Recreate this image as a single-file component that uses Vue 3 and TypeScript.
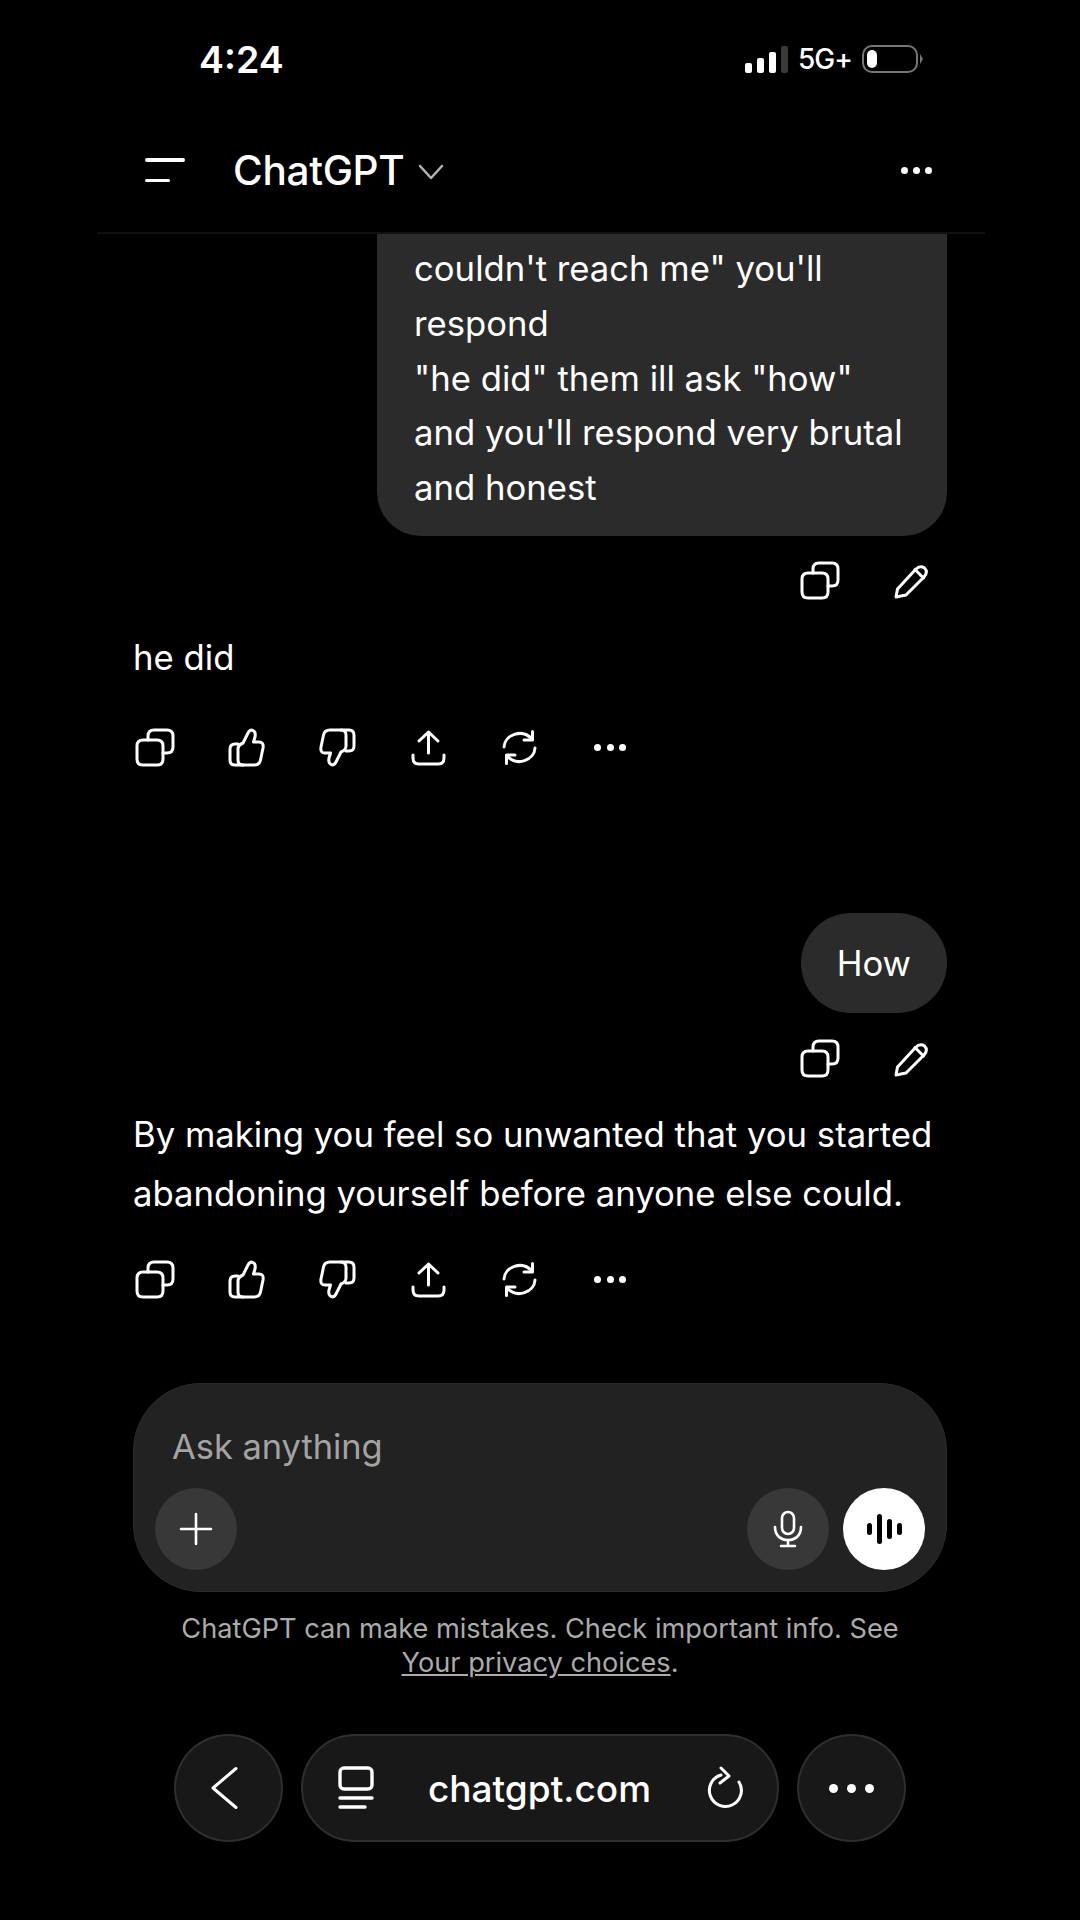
<template>
  <div class="phone">
    <!-- Status bar -->
    <div class="status">
      <span class="time">4:24</span>
      <div class="status-right">
        <div class="signal">
          <span v-for="(h, i) in signalBars" :key="i" class="signal-bar" :class="{ 'signal-bar--off': i === 3 }" :style="{ height: h + 'px' }"></span>
        </div>
        <span class="network">5G+</span>
        <div class="battery"><span class="battery-level"></span></div>
        <span class="battery-nub"></span>
      </div>
    </div>

    <!-- Header -->
    <header class="topbar">
      <div class="menu-icon"><span></span><span class="menu-short"></span></div>
      <span class="title">ChatGPT</span>
      <svg class="chevron" width="26" height="16" viewBox="0 0 26 16" fill="none" stroke="#b4b4b4" stroke-width="2.5" stroke-linecap="round" stroke-linejoin="round"><path d="M2 2 13 14 24 2" /></svg>
      <div class="topbar-dots"><i></i><i></i><i></i></div>
    </header>

    <!-- Conversation -->
    <main class="chat">
      <div class="bubble bubble--long">
        couldn't reach me" you'll<br />respond<br />"he did" them ill ask "how"<br />and you'll respond very brutal<br />and honest
      </div>
      <div class="user-actions first-actions">
        <svg v-for="name in userActions" :key="name" class="icon" viewBox="0 0 40 40" fill="none" stroke="#fff" stroke-width="3" stroke-linecap="round" stroke-linejoin="round">
          <path v-for="d in icons[name]" :key="d" :d="d" />
        </svg>
      </div>
      <p class="answer answer--short">he did</p>
      <div class="bot-actions bot-actions--first">
        <svg v-for="name in botActions" :key="name" class="icon" viewBox="0 0 40 40" fill="none" stroke="#fff" stroke-width="3" stroke-linecap="round" stroke-linejoin="round">
          <g :transform="name === 'down' ? 'rotate(180 20.5 20.5)' : undefined">
            <path v-for="d in icons[name]" :key="d" :d="d" />
          </g>
        </svg>
        <div class="icon-dots"><i></i><i></i><i></i></div>
      </div>

      <div class="bubble bubble--short">How</div>
      <div class="user-actions">
        <svg v-for="name in userActions" :key="name" class="icon" viewBox="0 0 40 40" fill="none" stroke="#fff" stroke-width="3" stroke-linecap="round" stroke-linejoin="round">
          <path v-for="d in icons[name]" :key="d" :d="d" />
        </svg>
      </div>
      <p class="answer">By making you feel so unwanted that you started<br />abandoning yourself before anyone else could.</p>
      <div class="bot-actions">
        <svg v-for="name in botActions" :key="name" class="icon" viewBox="0 0 40 40" fill="none" stroke="#fff" stroke-width="3" stroke-linecap="round" stroke-linejoin="round">
          <g :transform="name === 'down' ? 'rotate(180 20.5 20.5)' : undefined">
            <path v-for="d in icons[name]" :key="d" :d="d" />
          </g>
        </svg>
        <div class="icon-dots"><i></i><i></i><i></i></div>
      </div>
    </main>

    <!-- Composer -->
    <section class="composer">
      <div class="placeholder">Ask anything</div>
      <div class="composer-row">
        <button class="round-btn">
          <svg width="34" height="34" viewBox="0 0 34 34" fill="none" stroke="#fff" stroke-width="2.6" stroke-linecap="round"><path d="M17 2V32M2 17H32" /></svg>
        </button>
        <button class="round-btn mic-btn">
          <svg width="32" height="38" viewBox="0 0 32 38" fill="none" stroke="#fff" stroke-width="2.6" stroke-linecap="round" stroke-linejoin="round">
            <rect x="10" y="2" width="12" height="22" rx="6" />
            <path d="M3 17C3 25 8 30 16 30S29 25 29 17M16 30V36M9 36H23" />
          </svg>
        </button>
        <button class="round-btn voice-btn">
          <span v-for="(h, i) in voiceBars" :key="i" class="voice-bar" :style="{ height: h + 'px' }"></span>
        </button>
      </div>
    </section>
    <p class="disclaimer">ChatGPT can make mistakes. Check important info. See<br /><u>Your privacy choices</u>.</p>

    <!-- Browser bar -->
    <nav class="browser">
      <button class="browser-circle">
        <svg class="back-icon" width="27" height="44" viewBox="0 0 27 44" fill="none" stroke="#fff" stroke-width="3" stroke-linecap="round" stroke-linejoin="round"><path d="M25 2.5 2 22 25 41.5" /></svg>
      </button>
      <div class="url-pill">
        <svg width="36" height="44" viewBox="0 0 36 44" fill="none" stroke="#fff" stroke-width="3.4" stroke-linecap="round" stroke-linejoin="round">
          <rect x="2" y="2" width="32" height="21" rx="4" />
          <path d="M2 32H34M2 41H27" />
        </svg>
        <span class="url">chatgpt.com</span>
        <svg width="38" height="44" viewBox="0 0 38 44" fill="none" stroke="#fff" stroke-width="3" stroke-linecap="round" stroke-linejoin="round">
          <path d="M16 9A16 16 0 1 0 34 16" />
          <path d="M16 2 24 10 15 17" />
        </svg>
      </div>
      <button class="browser-circle">
        <div class="browser-dots"><i></i><i></i><i></i></div>
      </button>
    </nav>
  </div>
</template>

<script setup lang="ts">
const signalBars = [10, 15, 21, 27]
const voiceBars = [12, 30, 20, 12]

const userActions = ['copy', 'pencil']
const botActions = ['copy', 'up', 'down', 'share', 'regen']

const thumb = [
  'M17 16 22 6Q24 2 27 3.5 30 5 29 10L27.5 15H33Q38 15 37 21L34.5 33Q33.5 38 28 38H17Q12 38 12 33V22Q12 18 17 16Z',
  'M12 17H9Q4 17 4 22V33Q4 38 9 38H17',
]

const icons: Record<string, string[]> = {
  copy: [
    'M8 13H22Q28 13 28 19V32Q28 38 22 38H8Q2 38 2 32V19Q2 13 8 13Z',
    'M13 13V9Q13 3 19 3H32Q38 3 38 9V20Q38 26 32 26H28',
  ],
  pencil: [
    'M5 37 6.5 29 24.5 9.5Q29 5 33.5 8 37.5 12 33 17L15 35Z',
    'M24 9.5 32.5 18',
  ],
  up: thumb,
  down: thumb,
  share: [
    'M20.5 26V5M11 14 20.5 5 30 14',
    'M5 28V31Q5 37 11 37H30Q36 37 36 31V28',
  ],
  regen: [
    'M5 20C5.5 8 23 1 33 12',
    'M33.5 4.5V13H25',
    'M36 21C35.5 33 18 40 8 29',
    'M7.5 36.5V28H16',
  ],
}
</script>

<style>
html,
body {
  background: #000;
}
</style>

<style scoped>
.phone {
  width: 1080px;
  height: 1920px;
  background: #000;
  color: #fff;
  display: flex;
  flex-direction: column;
  overflow: hidden;
  font-family: Inter, "Liberation Sans", sans-serif;
}

/* Status bar */
.status {
  height: 118px;
  flex-shrink: 0;
  display: flex;
  align-items: center;
  justify-content: space-between;
  padding: 0 157px 0 199px;
}

.time {
  font-size: 37.5px;
  font-weight: 600;
}

.status-right {
  display: flex;
  align-items: center;
}

.signal {
  display: flex;
  align-items: flex-end;
  gap: 5px;
  height: 27px;
  margin-right: 10px;
}

.signal-bar {
  width: 7px;
  background: #fff;
  border-radius: 2px;
}

.signal-bar--off {
  background: #3a3a3a;
}

.network {
  font-size: 28px;
  font-weight: 500;
  margin-right: 10px;
  letter-spacing: -1px;
}

.battery {
  width: 56px;
  height: 28px;
  box-sizing: border-box;
  border: 2.5px solid #777;
  border-radius: 10px;
  padding: 3px;
}

.battery-level {
  display: block;
  width: 10px;
  height: 100%;
  background: #fff;
  border-radius: 5px;
}

.battery-nub {
  width: 0;
  height: 0;
  margin-left: 2px;
  border-left: 3px solid #777;
  border-top: 5px solid transparent;
  border-bottom: 5px solid transparent;
}

/* Header */
.topbar {
  height: 116px;
  flex-shrink: 0;
  margin: 0 95px 0 97px;
  padding: 0 53px 10px 48px;
  box-sizing: border-box;
  border-bottom: 2px solid #111;
  display: flex;
  align-items: center;
}

.menu-icon {
  width: 40px;
  display: flex;
  flex-direction: column;
  gap: 17px;
  margin-right: 48px;
}

.menu-icon span {
  display: block;
  height: 3.5px;
  background: #fff;
  border-radius: 2px;
}

.menu-icon .menu-short {
  width: 25px;
}

.title {
  font-size: 40.5px;
  font-weight: 500;
  letter-spacing: -0.3px;
}

.chevron {
  margin-left: 14px;
  margin-top: 4px;
}

.topbar-dots {
  margin-left: auto;
  display: flex;
  gap: 5px;
}

.topbar-dots i,
.icon-dots i,
.browser-dots i {
  display: block;
  background: #fff;
  border-radius: 50%;
}

.topbar-dots i {
  width: 7px;
  height: 7px;
}

/* Conversation */
.chat {
  flex: 1;
  min-height: 0;
  overflow: hidden;
  display: flex;
  flex-direction: column;
  justify-content: flex-end;
  padding: 0 133px;
}

.bubble {
  align-self: flex-end;
  flex-shrink: 0;
  background: #2b2b2b;
  font-size: 34.7px;
  line-height: 54.6px;
}

/* top padding runs under the header, the message is scrolled */
.bubble--long {
  width: 570px;
  box-sizing: border-box;
  padding: 120px 30px 22px 37px;
  border-radius: 44px;
}

.bubble--short {
  margin-top: 146px;
  padding: 23px 36px 22px;
  border-radius: 50px;
}

.user-actions {
  display: flex;
  justify-content: flex-end;
  flex-shrink: 0;
  gap: 51px;
  margin-top: 25px;
  padding-right: 16px;
}

.first-actions {
  margin-top: 24px;
}

.icon {
  width: 40px;
  height: 40px;
  flex-shrink: 0;
  display: block;
}

.answer {
  margin: 27px 0 0;
  flex-shrink: 0;
  font-size: 34.7px;
  line-height: 59px;
}

.answer--short {
  margin-top: 28px;
}

.bot-actions {
  display: flex;
  flex-shrink: 0;
  align-items: center;
  gap: 51px;
  margin-top: 36px;
  margin-bottom: 84px;
  padding-left: 2px;
}

.bot-actions--first {
  margin-top: 40px;
  margin-bottom: 0;
}

.icon-dots {
  width: 40px;
  display: flex;
  justify-content: center;
  gap: 5.5px;
}

.icon-dots i {
  width: 7px;
  height: 7px;
}

/* Composer */
.composer {
  flex-shrink: 0;
  height: 209px;
  box-sizing: border-box;
  margin: 0 133px;
  padding: 43px 21px 21px;
  background: #222;
  border: 1px solid #2c2c2c;
  border-radius: 68px;
  display: flex;
  flex-direction: column;
  justify-content: space-between;
}

.placeholder {
  padding-left: 17px;
  font-size: 34.4px;
  line-height: 40px;
  color: #a3a3a3;
}

.composer-row {
  display: flex;
  align-items: center;
  gap: 14px;
}

.round-btn {
  width: 82px;
  height: 82px;
  padding: 0;
  border: none;
  border-radius: 50%;
  background: #383838;
  display: flex;
  align-items: center;
  justify-content: center;
}

.mic-btn {
  margin-left: auto;
}

.voice-btn {
  background: #fff;
  gap: 5px;
}

.voice-bar {
  width: 5px;
  background: #000;
  border-radius: 3px;
}

.disclaimer {
  flex-shrink: 0;
  margin: 20px 0 0;
  text-align: center;
  font-size: 27.2px;
  line-height: 34px;
  color: #ababab;
}

/* Browser bar */
.browser {
  flex-shrink: 0;
  display: flex;
  justify-content: center;
  gap: 18px;
  margin-top: 54px;
  margin-bottom: 78px;
}

.browser-circle {
  width: 109px;
  height: 108px;
  padding: 0;
  box-sizing: border-box;
  background: #181818;
  border: 2px solid #2e2e2e;
  border-radius: 50%;
  display: flex;
  align-items: center;
  justify-content: center;
}

.back-icon {
  margin-right: 8px;
}

.url-pill {
  width: 478px;
  height: 108px;
  box-sizing: border-box;
  padding: 0 34px 0 35px;
  background: #181818;
  border: 2px solid #2e2e2e;
  border-radius: 54px;
  display: flex;
  align-items: center;
  justify-content: space-between;
}

.url {
  font-size: 37px;
  font-weight: 500;
}

.browser-dots {
  display: flex;
  gap: 9px;
}

.browser-dots i {
  width: 9px;
  height: 9px;
}
</style>
